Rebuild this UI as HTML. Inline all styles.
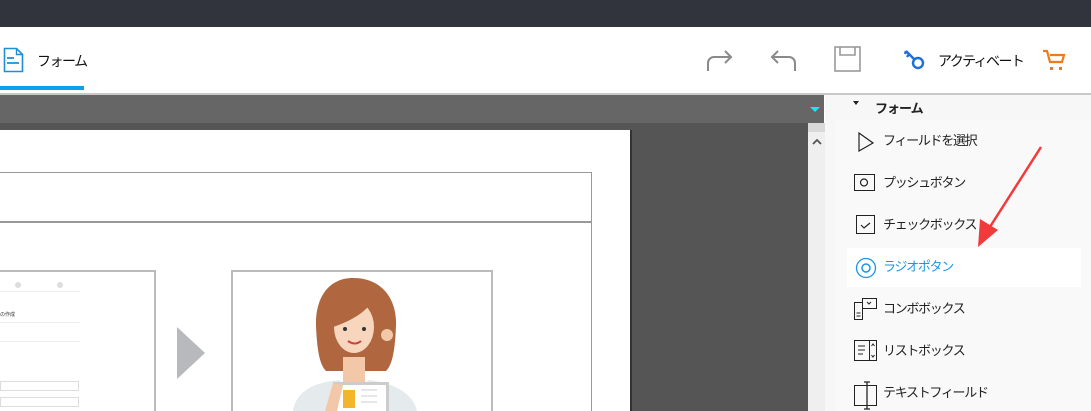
<!DOCTYPE html>
<html style="overflow:hidden;width:1091px;height:411px"><head><meta charset="utf-8"><style>
*{margin:0;padding:0;box-sizing:border-box}
body{width:1091px;height:411px;overflow:hidden;position:relative;background:#fff;font-family:"Liberation Sans","Noto Sans CJK JP",sans-serif}
.a{position:absolute}
.item{position:absolute;left:883px;font-size:13px;letter-spacing:-1.3px;color:#222;line-height:18px;white-space:nowrap}
</style></head><body>
<div style="position:absolute;left:0;top:0;width:1091px;height:411px;overflow:hidden">
<div class="a" style="left:0;top:0;width:1091px;height:27px;background:#31343c"></div>
<div class="a" style="left:0;top:27px;width:1091px;height:66px;background:#fff"></div>
<svg class="a" style="left:3px;top:47px" width="22" height="26" viewBox="0 0 22 26"><path d="M1.5 1.5h12l6 6v17h-18z" fill="none" stroke="#1c8fd6" stroke-width="1.6"/><path d="M13.5 1.5v6h6" fill="none" stroke="#1c8fd6" stroke-width="1.4"/><path d="M4 11h7M4 16h12" stroke="#1c8fd6" stroke-width="1.8"/></svg>
<div class="a" style="left:37px;top:51px;font-size:14px;letter-spacing:-1.5px;color:#111">フォーム</div>
<div class="a" style="left:0;top:86px;width:84px;height:4px;background:#0aa0f0"></div>
<div class="a" style="left:0;top:93px;width:1091px;height:2px;background:#c8c8c8"></div>
<svg class="a" style="left:705px;top:47px" width="30" height="25" viewBox="0 0 30 25"><path d="M3 24v-8a6 6 0 0 1 6-6h17M20 4l6 6-6 6" fill="none" stroke="#8a8a8a" stroke-width="2"/></svg>
<svg class="a" style="left:768px;top:47px" width="30" height="25" viewBox="0 0 30 25"><path d="M27 24v-8a6 6 0 0 0-6-6H4M10 4l-6 6 6 6" fill="none" stroke="#8a8a8a" stroke-width="2"/></svg>
<svg class="a" style="left:834px;top:46px" width="28" height="27" viewBox="0 0 28 27"><rect x="1" y="1" width="25" height="24" fill="none" stroke="#999" stroke-width="1.6"/><path d="M6 1v8h15V1" fill="none" stroke="#999" stroke-width="1.6"/></svg>
<svg class="a" style="left:903px;top:47px" width="24" height="24" viewBox="0 0 24 24"><circle cx="15" cy="16" r="5" fill="none" stroke="#1e6fd9" stroke-width="2.4"/><path d="M11 12L3 4M3 4l-1 3M6 7l-2 3" stroke="#1e6fd9" stroke-width="2.4" fill="none"/></svg>
<div class="a" style="left:938px;top:51px;font-size:14px;letter-spacing:-1.6px;color:#111">アクティベート</div>
<svg class="a" style="left:1042px;top:48px" width="26" height="24" viewBox="0 0 26 24"><path d="M1 3h4l3 11h12l2-7H8" fill="none" stroke="#f07a1a" stroke-width="2.2"/><rect x="8" y="19" width="3" height="3" fill="#f07a1a"/><rect x="17" y="19" width="3" height="3" fill="#f07a1a"/></svg>
<div class="a" style="left:0;top:95px;width:824px;height:28px;background:#666"></div>
<div class="a" style="left:810px;top:107px;width:0;height:0;border-left:5px solid transparent;border-right:5px solid transparent;border-top:5px solid #19e5f0"></div>
<div class="a" style="left:0;top:123px;width:808px;height:288px;background:#555"></div>
<div class="a" style="left:808px;top:123px;width:17px;height:288px;background:#efefef"></div>
<div class="a" style="left:808px;top:123px;width:17px;height:9px;background:#d9d9d9"></div>
<svg class="a" style="left:812px;top:138px" width="10" height="8" viewBox="0 0 10 8"><path d="M1 6l4-4 4 4" stroke="#555" stroke-width="1.8" fill="none"/></svg>
<div class="a" style="left:0;top:130px;width:632px;height:300px;background:#fff;border-right:2px solid #333"></div>
<div class="a" style="left:-2px;top:172px;width:594px;height:260px;border:1px solid #999"></div>
<div class="a" style="left:0;top:221px;width:592px;height:2px;background:#999"></div>
<div class="a" style="left:-2px;top:270px;width:158px;height:160px;border:2px solid #bbb"></div>
<div class="a" style="left:0;top:281px;width:150px;height:120px;font-size:4px;color:#889">
<div class="a" style="left:15px;top:1px;width:6px;height:6px;border-radius:50%;background:#ddd"></div>
<div class="a" style="left:57px;top:1px;width:6px;height:6px;border-radius:50%;background:#ddd"></div>
<div class="a" style="left:0;top:10px;width:80px;height:1px;background:#eee"></div>
<div class="a" style="left:0;top:30px;font-size:5px;color:#333">の作成</div>
<div class="a" style="left:0;top:41px;width:80px;height:1px;background:#eee"></div>
<div class="a" style="left:0;top:60px;width:80px;height:1px;background:#eee"></div>
<div class="a" style="left:0;top:100px;width:79px;height:10px;border:1px solid #ddd"></div>
<div class="a" style="left:0;top:116px;width:79px;height:10px;border:1px solid #ddd"></div>
</div>
<div class="a" style="left:177px;top:327px;width:0;height:0;border-top:26px solid transparent;border-bottom:26px solid transparent;border-left:28px solid #b8b9bd"></div>
<div class="a" style="left:231px;top:270px;width:262px;height:160px;border:2px solid #bbb"></div>
<svg class="a" style="left:233px;top:272px" width="258" height="139" viewBox="0 0 258 139">
<path d="M120 6c-26 0-38 22-37 48 1 22 3 38 10 45h60c7-7 9-23 10-45 1-26-13-48-43-48z" fill="#b0673f"/>
<rect x="110" y="85" width="22" height="30" fill="#f3c8a8"/>
<ellipse cx="121" cy="55" rx="20" ry="26" fill="#f8d6bd"/>
<path d="M100 55c0-30 20-42 40-36 10 5 18 20 18 50-8-14-12-30-20-38-8 12-26 20-38 24z" fill="#b0673f"/>
<circle cx="154" cy="63" r="6" fill="#f3c8a8"/>
<circle cx="112" cy="57" r="2" fill="#333"/><circle cx="131" cy="57" r="2" fill="#333"/>
<path d="M115 69q7 5 13 0" stroke="#c4463f" stroke-width="2" fill="none"/>
<path d="M106 108q15 14 30 0q42 6 48 31H60q4-27 46-31z" fill="#e5eaec"/>
<rect x="100" y="110" width="56" height="34" fill="#ccc"/>
<rect x="103" y="113" width="50" height="28" fill="#fff"/>
<rect x="110" y="118" width="12" height="18" fill="#f3b52a"/>
<path d="M128 118h16M128 124h16M128 130h16" stroke="#ccc"/>
<path d="M92 139l8-28 10 2-6 26z" fill="#f3c8a8"/>
</svg>
<div class="a" style="left:825px;top:95px;width:266px;height:316px;background:#f7f7f8"></div>
<div class="a" style="left:835px;top:120px;width:256px;height:291px;background:#f9f9fa"></div>
<div class="a" style="left:853px;top:101px;width:0;height:0;border-left:3.5px solid transparent;border-right:3.5px solid transparent;border-top:4px solid #222"></div>
<div class="a" style="left:875px;top:98px;font-size:13px;letter-spacing:-1px;font-weight:bold;color:#222">フォーム</div>
<svg class="a" style="left:857px;top:132px" width="18" height="20" viewBox="0 0 18 20"><path d="M2 1v18l14-8z" fill="none" stroke="#222" stroke-width="1.2"/></svg>
<div class="item" style="top:132px">フィールドを選択</div>
<svg class="a" style="left:854px;top:174px" width="22" height="18" viewBox="0 0 22 18"><rect x="0.5" y="0.5" width="20" height="16" fill="none" stroke="#222"/><circle cx="10" cy="8.5" r="3.5" fill="none" stroke="#222" stroke-width="1.2"/></svg>
<div class="item" style="top:174px">プッシュボタン</div>
<svg class="a" style="left:856px;top:215px" width="20" height="20" viewBox="0 0 20 20"><rect x="0.5" y="0.5" width="18" height="18" fill="none" stroke="#222"/><path d="M5 10l3 3 6-5" fill="none" stroke="#222" stroke-width="1.2"/></svg>
<div class="item" style="top:216px">チェックボックス</div>
<div class="a" style="left:847px;top:248px;width:234px;height:39px;background:#fff"></div>
<svg class="a" style="left:855px;top:257px" width="22" height="22" viewBox="0 0 22 22"><circle cx="11" cy="11" r="9.5" fill="none" stroke="#1b96e6" stroke-width="1.3"/><circle cx="11" cy="11" r="4" fill="none" stroke="#1b96e6" stroke-width="1.5"/></svg>
<div class="item" style="top:258px;color:#1b96e6">ラジオポタン</div>
<svg class="a" style="left:854px;top:298px" width="24" height="22" viewBox="0 0 24 22"><path d="M0.5 4.5h8v17h-8zM8.5 0.5h14v10h-14z" fill="none" stroke="#222"/><path d="M2.5 15h4M2.5 18h4M13 4l2 2 2-2" stroke="#222" fill="none"/></svg>
<div class="item" style="top:300px">コンボボックス</div>
<svg class="a" style="left:854px;top:340px" width="24" height="22" viewBox="0 0 24 22"><rect x="0.5" y="0.5" width="22" height="20" fill="none" stroke="#222"/><path d="M15.5 0.5v20M4 6h7M4 10h7M4 14h5M17.5 6l1.5-2 1.5 2M17.5 15l1.5 2 1.5-2" stroke="#222" fill="none"/></svg>
<div class="item" style="top:342px">リストボックス</div>
<svg class="a" style="left:854px;top:381px" width="24" height="30" viewBox="0 0 24 30"><rect x="0.5" y="4.5" width="22" height="20" fill="none" stroke="#222"/><path d="M13 1v27M10 1h6M10 28h6" stroke="#222" stroke-width="1.3"/></svg>
<div class="item" style="top:384px">テキストフィールド</div>
<svg class="a" style="left:960px;top:140px" width="90" height="115" viewBox="0 0 90 115"><path d="M81 7L28 90" stroke="#f23a3a" stroke-width="2.5"/><path d="M18 107l2-28 18 11z" fill="#f23a3a"/></svg>
</div>
</body></html>
